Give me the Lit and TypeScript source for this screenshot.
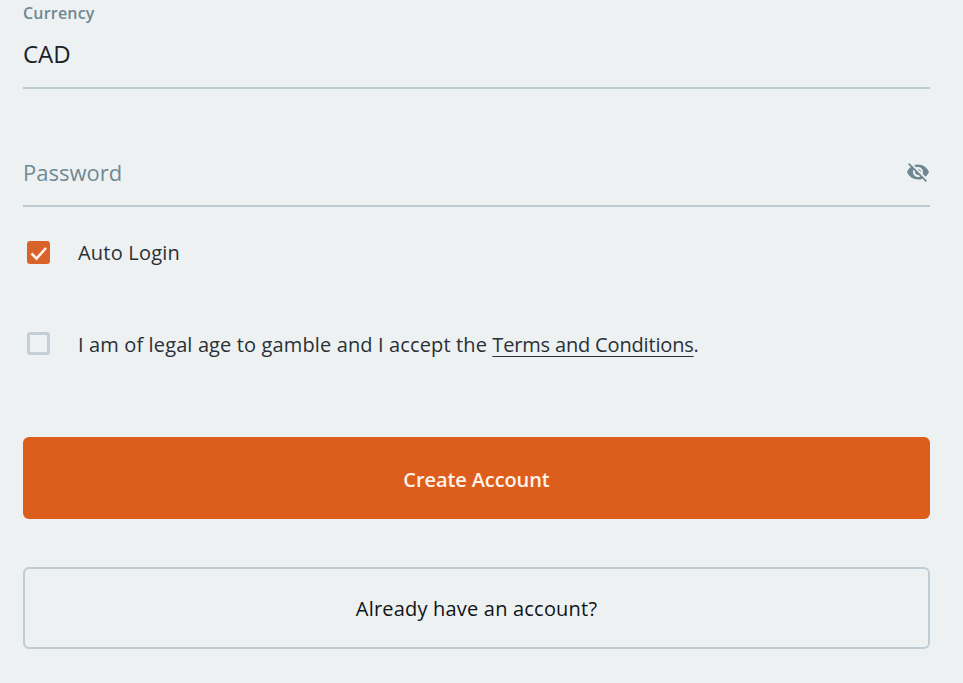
import { LitElement, html, css } from "lit";
import { customElement } from "lit/decorators.js";

@customElement("app-root")
export class AppRoot extends LitElement {
  static styles = css`
    :host {
      display: block;
      height: 683px;
      overflow: hidden;
      background: #edf1f2;
      font-family: "Open Sans", "Noto Sans", sans-serif;
      color: #2a3035;
    }
    .page {
      display: flex;
      flex-direction: column;
      padding: 0 33px 0 23px;
    }
    .currency {
      height: 89px;
      box-sizing: border-box;
      border-bottom: 2px solid #bccad2;
      display: flex;
      flex-direction: column;
    }
    .label {
      font-size: 16px;
      line-height: 26px;
      font-weight: 600;
      color: #6f8793;
      letter-spacing: 0.2px;
    }
    .value {
      margin-top: 14px;
      font-size: 24px;
      line-height: 28px;
      color: #1b2126;
    }
    .password {
      margin-top: 58px;
      height: 60px;
      box-sizing: border-box;
      border-bottom: 2px solid #bccad2;
      display: flex;
      align-items: center;
      justify-content: space-between;
      padding-bottom: 8px;
      font-size: 22px;
      color: #718995;
    }
    .eye {
      width: 24px;
      height: 24px;
      fill: #6f8793;
    }
    .check {
      display: flex;
      align-items: center;
      gap: 28px;
      padding-left: 4px;
      font-size: 20px;
      line-height: 28px;
      letter-spacing: 0.13px;
    }
    .auto {
      margin-top: 32px;
    }
    .auto .label-text {
      letter-spacing: 0.2px;
    }
    .terms {
      margin-top: 64px;
    }
    .box {
      width: 23px;
      height: 23px;
      box-sizing: border-box;
      border-radius: 3px;
      flex: none;
      display: flex;
      align-items: center;
      justify-content: center;
      margin-bottom: 2px;
    }
    .on {
      background: #d9622a;
    }
    .off {
      border: 3px solid #c3ced6;
      margin-bottom: 4px;
    }
    .box svg {
      width: 23px;
      height: 23px;
      fill: none;
      stroke: #fdf1e8;
      stroke-width: 2.6;
    }
    a {
      color: inherit;
      letter-spacing: -0.17px;
      text-decoration: underline;
      text-decoration-thickness: 1px;
      text-underline-offset: 4px;
    }
    .btn {
      display: flex;
      align-items: center;
      justify-content: center;
      height: 82px;
      box-sizing: border-box;
      border-radius: 6px;
      font-size: 20px;
      font-family: inherit;
    }
    .primary {
      margin-top: 78px;
      padding-top: 2px;
      background: #dd5d1c;
      color: #fdf3ea;
      font-weight: 600;
      letter-spacing: -0.1px;
    }
    .secondary {
      margin-top: 48px;
      padding-top: 1px;
      border: 2px solid #c0ccd4;
      color: #0f1417;
      font-weight: 500;
      letter-spacing: 0.2px;
    }
  `;

  render() {
    return html`
      <div class="page">
        <div class="currency">
          <div class="label">Currency</div>
          <div class="value">CAD</div>
        </div>
        <div class="password">
          <span>Password</span>
          <svg class="eye" viewBox="0 0 24 24">
            <path d="M12 7c2.76 0 5 2.24 5 5 0 .65-.13 1.26-.36 1.83l2.92 2.92c1.51-1.26 2.7-2.89 3.43-4.75-1.73-4.39-6-7.5-11-7.5-1.4 0-2.74.25-3.98.7l2.16 2.16C10.74 7.13 11.35 7 12 7zM2 4.27l2.28 2.28.46.46C3.08 8.3 1.78 10.02 1 12c1.73 4.39 6 7.5 11 7.5 1.55 0 3.03-.3 4.38-.84l.42.42L19.73 22 21 20.73 3.27 3 2 4.27zM7.53 9.8l1.55 1.55c-.05.21-.08.43-.08.65 0 1.66 1.34 3 3 3 .22 0 .44-.03.65-.08l1.55 1.55c-.67.33-1.41.53-2.2.53-2.76 0-5-2.24-5-5 0-.79.2-1.53.53-2.2zm4.31-.78l3.15 3.15.02-.16c0-1.66-1.34-3-3-3l-.17.01z"/>
          </svg>
        </div>
        <div class="check auto">
          <span class="box on"><svg viewBox="0 0 23 23"><path d="M4.5 12.5l5 5 9.5-10.5"/></svg></span>
          <span class="label-text">Auto Login</span>
        </div>
        <div class="check terms">
          <span class="box off"></span>
          <span>I am of legal age to gamble and I accept the <a href="#">Terms and Conditions</a>.</span>
        </div>
        <div class="btn primary">Create Account</div>
        <div class="btn secondary">Already have an account?</div>
      </div>
    `;
  }
}
